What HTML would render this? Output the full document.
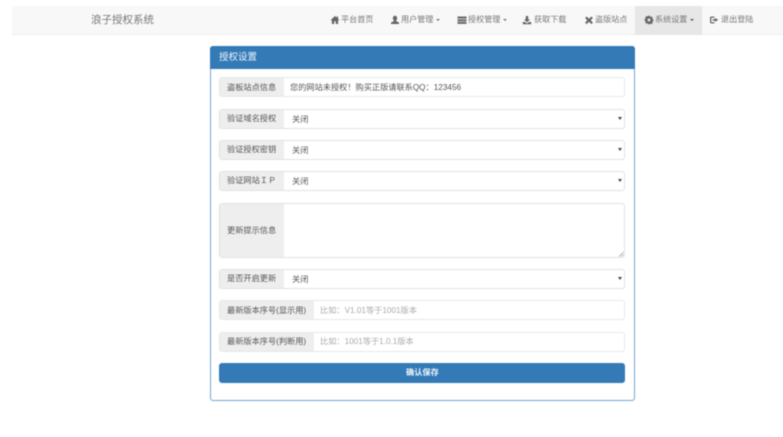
<!DOCTYPE html>
<html lang="zh">
<head>
<meta charset="utf-8">
<title>授权设置</title>
<style>
html,body{margin:0;padding:0;background:#fff}
body{position:relative;width:783px;height:437px;overflow:hidden;font-family:"Liberation Sans","Noto Sans CJK SC",sans-serif;color:#555}
div,span,svg{position:absolute;box-sizing:border-box}
#w{left:0;top:0;width:783px;height:437px;filter:blur(.4px)}
.t{white-space:nowrap;line-height:12px;height:12px}
.nav{font-size:8.1px;color:#777;top:14px}
.ic{top:15px;width:10px;height:10px;fill:#666}
.c{width:0;height:0;top:19px;border-left:2px solid transparent;border-right:2px solid transparent;border-top:2px solid #777}
.row{left:219px;width:406px;border:1px solid #e2e2e2;border-radius:3px;background:#fff}
.ad{left:0;top:0;bottom:0;background:#eee;border-radius:2px 0 0 2px}
.lb{font-size:8.2px;color:#555;white-space:nowrap;line-height:12px}
.v{font-size:8.2px;color:#555;white-space:nowrap;line-height:12px}
.ph{color:#aaa}
.ar{width:0;height:0;right:2px;top:7px;border-left:2.5px solid transparent;border-right:2.5px solid transparent;border-top:3px solid #444}
</style>
</head>
<body>
<div id="w">
<div style="left:12px;top:6px;width:771px;height:29px;background:#f8f8f8;border-bottom:1px solid #eee"></div>
<div class="t" style="left:91px;top:14px;font-size:10.5px;color:#777">浪子授权系统</div>
<div style="left:635px;top:6px;width:67px;height:29px;background:#e7e7e7"></div>

<svg class="ic" style="left:330px" viewBox="0 0 10 10"><path d="M5 1 .5 5.200h1.400V9h2.300V6.300h1.600V9h2.300V5.200h1.400L8 3.600V1.400H6.800v1.100z"/></svg>
<div class="t nav" style="left:341px">平台首页</div>

<svg class="ic" style="left:390px" viewBox="0 0 10 10"><path d="M5 .8c1.300 0 2.100 1 2.100 2.400 0 1-.4 1.900-1 2.300v.8c1 .4 2.900.7 2.900 1.700V9H1V8c0-1 1.900-1.300 2.900-1.700v-.8c-.6-.4-1-1.300-1-2.300C2.900 1.800 3.700.8 5 .8z"/></svg>
<div class="t nav" style="left:401px">用户管理</div>
<div class="c" style="left:436px"></div>

<svg class="ic" style="left:457px" viewBox="0 0 10 10"><path d="M.5 1.500h9v2h-9zM.5 4.200h9v2h-9zM.5 6.900h9v2h-9z"/></svg>
<div class="t nav" style="left:468px">授权管理</div>
<div class="c" style="left:503px"></div>

<svg class="ic" style="left:522px" viewBox="0 0 10 10"><path d="M3.800 1h2.400v3.400h1.900L5 7.200 1.900 4.400h1.900zM.8 7h2.300L5 8.500 6.900 7h2.300v2.200H.8z"/></svg>
<div class="t nav" style="left:534px">获取下载</div>

<svg class="ic" style="left:584px" viewBox="0 0 10 10"><path d="M2.600 1.500 5 3.700l2.400-2.200 1.500 1.500L6.700 5.300l2.200 2.300-1.500 1.500L5 6.800 2.600 9.100 1.100 7.600l2.200-2.300L1.100 3z"/></svg>
<div class="t nav" style="left:595px">盗版站点</div>

<svg class="ic" style="left:644px" viewBox="0 0 10 10"><path fill-rule="evenodd" d="M4 .8h2l.3 1.300 1.200-.6 1.300 1.300-.7 1.200 1.300.4v1.900l-1.300.4.700 1.200-1.300 1.300-1.200-.7L6 9.300H4l-.3-1.300-1.200.7-1.300-1.300.7-1.200L.6 5.800V3.900l1.300-.4-.7-1.200 1.300-1.300 1.200.6zM5 3.500a1.400 1.400 0 1 0 0 2.900 1.400 1.400 0 0 0 0-2.900z"/></svg>
<div class="t nav" style="left:655px">系统设置</div>
<div class="c" style="left:690px;border-top-color:#555"></div>

<svg class="ic" style="left:709px" viewBox="0 0 10 10"><path d="M1 2.800C1 2 1.600 1.500 2.300 1.500h3v1.300H2.500c-.1 0-.2.100-.2.200v4c0 .1.100.2.200.2h2.800v1.300h-3C1.600 8.200 1 7.700 1 6.900zM5.800 2.900 9.300 4.900 5.800 6.900V5.600H3.600V4.200h2.200z"/></svg>
<div class="t nav" style="left:721px">退出登陆</div>

<div style="left:210px;top:46px;width:425px;height:355px;border:1px solid #6fa6d8;border-radius:3px;background:#fff"></div>
<div style="left:210px;top:46px;width:425px;height:23px;background:#337ab7;border-radius:3px 3px 0 0"></div>
<div class="t" style="left:219px;top:52px;font-size:9.5px;color:#f2f6fa">授权设置</div>

<div class="row" style="top:77px;height:20px;border-color:#e8e8e8">
  <div class="ad" style="width:64px"><div class="lb" style="left:7px;top:4px">盗板站点信息</div></div>
  <div class="v" style="left:70px;top:4px">您的网站未授权！购买正版请联系QQ：123456</div>
</div>

<div class="row" style="top:109px;height:20px">
  <div class="ad" style="width:64px"><div class="lb" style="left:7px;top:3px">验证域名授权</div></div>
  <div class="v" style="left:72px;top:4px">关闭</div><div class="ar"></div>
</div>

<div class="row" style="top:140px;height:20px">
  <div class="ad" style="width:64px"><div class="lb" style="left:7px;top:3px">验证授权密钥</div></div>
  <div class="v" style="left:72px;top:4px">关闭</div><div class="ar"></div>
</div>

<div class="row" style="top:171px;height:20px">
  <div class="ad" style="width:64px"><div class="lb" style="left:7px;top:3px">验证网站ＩＰ</div></div>
  <div class="v" style="left:72px;top:4px">关闭</div><div class="ar"></div>
</div>

<div class="row" style="top:203px;height:55px">
  <div class="ad" style="width:64px"><div class="lb" style="left:7px;top:21px">更新提示信息</div></div>
  <svg style="right:0;bottom:0;width:6px;height:6px" viewBox="0 0 6 6"><path d="M5.500 1 1 5.500M5.500 3.500 3.500 5.500" stroke="#999" stroke-width=".7" fill="none"/></svg>
</div>

<div class="row" style="top:269px;height:20px">
  <div class="ad" style="width:64px"><div class="lb" style="left:7px;top:3px">是否开启更新</div></div>
  <div class="v" style="left:72px;top:4px">关闭</div><div class="ar"></div>
</div>

<div class="row" style="top:300px;height:20px;border-color:#e8e8e8">
  <div class="ad" style="width:94px"><div class="lb" style="left:7px;top:4px">最新版本序号(显示用)</div></div>
  <div class="v ph" style="left:100px;top:4px">比如：V1.01等于1001版本</div>
</div>

<div class="row" style="top:332px;height:20px;border-color:#e8e8e8">
  <div class="ad" style="width:94px"><div class="lb" style="left:7px;top:3px">最新版本序号(判断用)</div></div>
  <div class="v ph" style="left:100px;top:3px">比如：1001等于1.0.1版本</div>
</div>

<div style="left:219px;top:363px;width:406px;height:20px;background:#337ab7;border-radius:3px"></div>
<div class="t" style="left:406px;top:367px;font-size:8.2px;color:#f2f6fa;font-weight:bold">确认保存</div>
</div>
</body>
</html>
